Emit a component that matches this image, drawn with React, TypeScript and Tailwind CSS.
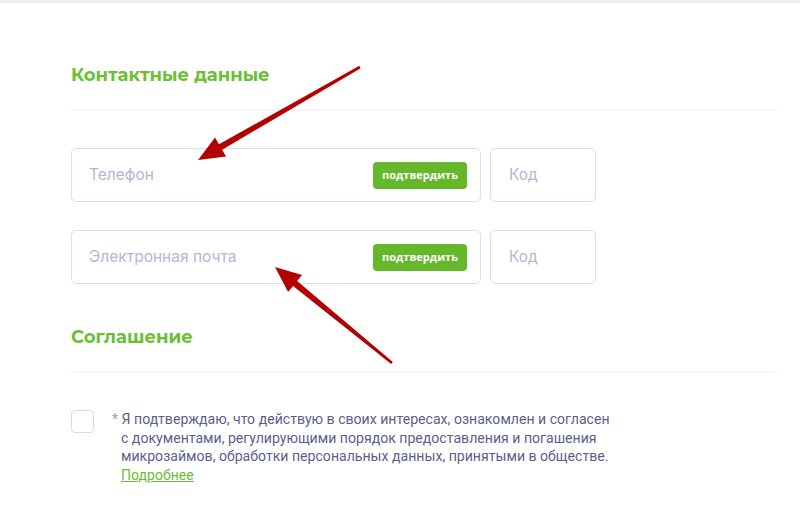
import React from 'react';

const Arrow: React.FC<{ x1: number; y1: number; x2: number; y2: number }> = ({ x1, y1, x2, y2 }) => {
    const dx = x2 - x1;
    const dy = y2 - y1;
    const len = Math.hypot(dx, dy);
    const ux = dx / len;
    const uy = dy / len;
    const px = -uy;
    const py = ux;
    const headLen = 26;
    const headW = 11;
    const bx = x2 - ux * headLen;
    const by = y2 - uy * headLen;
    const shaft = [
        [x1 + px * 1.3, y1 + py * 1.3],
        [bx + px * 3.2, by + py * 3.2],
        [bx + px * headW, by + py * headW],
        [x2, y2],
        [bx - px * headW, by - py * headW],
        [bx - px * 3.2, by - py * 3.2],
        [x1 - px * 1.3, y1 - py * 1.3],
    ]
        .map((p) => p.join(','))
        .join(' ');
    return <polygon points={shaft} fill="#b30000" />;
};

const ConfirmField: React.FC<{ placeholder: string }> = ({ placeholder }) => (
    <div className="flex gap-[9px]">
        <div className="flex h-[54px] w-[410px] items-center justify-between rounded-[5px] border border-[#dcdcef] pl-[17px] pr-[13px]">
            <span className="text-[15.5px] text-[#b5b5d6]" style={{ fontFamily: 'Inter, sans-serif' }}>{placeholder}</span>
            <button className="flex h-[27px] w-[94px] items-center justify-center rounded-[4px] bg-[#64b82a] text-[11px] font-bold text-white" style={{ fontFamily: '"Open Sans", sans-serif' }}>
                подтвердить
            </button>
        </div>
        <div className="flex h-[54px] w-[106px] items-center rounded-[5px] border border-[#dcdcef] pl-[18px]">
            <span className="text-[15.5px] text-[#b5b5d6]" style={{ fontFamily: 'Inter, sans-serif' }}>Код</span>
        </div>
    </div>
);

export default function App() {
    return (
        <div className="relative h-[514px] w-[800px] overflow-hidden bg-white">
            <div className="h-[3px] bg-[#eeeee6]" />
            <div className="w-[778px] pl-[71px]" style={{ fontFamily: 'Montserrat, "Open Sans", sans-serif' }}>
                <h2 className="pt-[60px] text-[18px] font-bold leading-[24px] text-[#6abf33]">Контактные данные</h2>
                <div className="mt-[22px] h-[2px] bg-[#f5f6fd]" />
                <div className="mt-[37px] flex flex-col gap-[28px]">
                    <ConfirmField placeholder="Телефон" />
                    <ConfirmField placeholder="Электронная почта" />
                </div>
                <h2 className="pt-[41px] text-[18px] font-bold leading-[24px] text-[#6abf33]">Соглашение</h2>
                <div className="mt-[22px] h-[2px] bg-[#f5f6fd]" />
                <div className="mt-[37px] flex gap-[18px]">
                    <div className="h-[23px] w-[23px] shrink-0 rounded-[4px] border border-[#d8d8ee]" />
                    <p className="pl-[9px] -indent-[9px] text-[14.1px] leading-[18.5px] text-[#5b5f8e]" style={{ fontFamily: 'Roboto, sans-serif' }}>
                        <span className="text-[#9a9cc0]">*</span> Я подтверждаю, что действую в своих интересах, ознакомлен и согласен
                        <br />
                        с документами, регулирующими порядок предоставления и погашения
                        <br />
                        микрозаймов, обработки персональных данных, принятыми в обществе.
                        <br />
                        <a className="text-[#6abf33] underline">Подробнее</a>
                    </p>
                </div>
            </div>
            <svg className="pointer-events-none absolute inset-0" width="800" height="514">
                <Arrow x1={360} y1={67} x2={198} y2={160} />
                <Arrow x1={392} y1={363} x2={275} y2={267} />
            </svg>
        </div>
    );
}
